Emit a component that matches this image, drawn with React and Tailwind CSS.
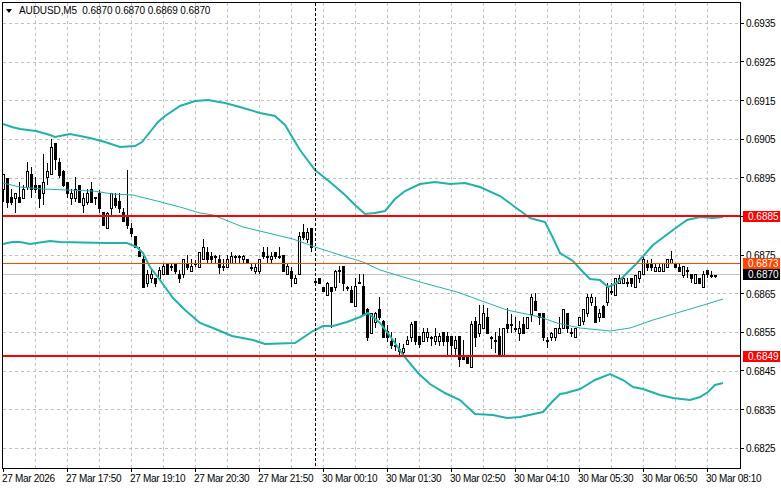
const TEAL = "#20b2aa";

// candle rows: [high, low, bodyTop, bodyBottom, filled], read off the chart at 3x
const SEGMENTS = [
  { y0: 130, rows: [
    [132,215,132,178,0],[145,235,145,215,1],[178,225,200,215,1],[190,248,190,203,0],[155,215,200,215,1],
    [165,205,178,203,0],[97,180,122,170,0],[110,205,132,178,1],[140,190,165,178,1],[165,235,165,203,1],
    [72,225,155,190,0],[100,165,122,142,0],[28,130,52,132,0],[38,120,38,88,1],[85,145,97,135,1],
    [120,170,122,165,1],[155,205,155,190,1],[178,225,190,203,0],[142,215,178,203,0],[165,215,165,215,1],
    [190,248,203,225,0],[178,225,190,215,0],[155,215,178,215,1],[200,225,202,204,1],[180,248,190,235,1],
    [245,285,245,285,1],[245,295,248,295,0],[190,260,190,235,0],[190,235,203,225,1],[190,250,212,235,1],
    [235,272,247,272,1],[120,298,260,285,1],[280,322,295,308,1],[318,355,318,352,1],[350,378,362,378,1],
    [378,470,388,470,1],[420,470,432,458,0],[420,458,432,445,0],[445,470,445,458,1],[410,445,420,445,0],
    [398,432,408,432,0],[398,432,400,432,1],[398,422,408,410,1],[398,432,400,422,1],[420,458,432,445,1],
    [388,445,388,432,0],[375,420,400,410,1],[388,422,408,422,0],[390,410,398,401,1],[365,410,365,410,0],
  ]},
  { y0: 200, rows: [
    [118,178,142,178,0],[142,190,155,178,1],[155,190,167,178,1],[165,190,167,169,1],[165,223,178,200,1],
    [178,212,198,200,1],[165,200,178,200,0],[155,190,167,190,0],[165,190,167,169,1],[165,190,167,169,1],
    [165,190,167,178,0],[178,190,178,190,1],[190,212,200,202,1],[190,223,200,212,0],[178,223,178,212,0],
    [142,178,155,167,1],[142,190,167,169,1],[155,190,167,178,0],[155,178,155,167,1],[142,178,167,169,1],
    [165,212,165,212,1],[190,223,198,223,0],[200,260,212,235,1],[225,248,235,248,0],[97,223,108,223,0],
    [72,120,97,110,1],[85,130,97,118,0],[85,155,85,140,1],[235,248,244,246,1],[235,248,235,248,1],
    [260,272,260,272,1],[245,285,248,285,0],[260,385,260,272,1],[210,272,212,260,0],[198,248,210,212,1],
    [198,272,198,248,1],[258,272,260,262,1],[258,305,270,305,1],[235,318,258,318,0],[223,248,245,247,1],
  ]},
  { y0: 260, rows: [
    [42,165,78,165,1],[145,242,148,230,1],[160,220,160,218,0],[155,205,158,185,0],[110,180,148,172,1],
    [180,230,182,230,1],[195,245,212,230,1],[215,268,242,255,1],[235,272,255,258,1],[250,285,268,272,1],
    [252,290,265,275,0],[228,255,240,253,0],[185,245,192,230,0],[182,255,183,242,1],[228,265,228,253,1],
    [205,242,217,242,0],[205,245,217,230,0],[228,258,230,232,1],[205,255,228,242,0],[218,258,228,242,0],
    [215,258,217,242,1],[215,285,228,242,1],[228,285,228,255,1],[228,285,240,265,0],[228,322,228,298,1],
    [240,298,288,298,1],[285,310,290,310,1],[182,322,192,322,0],[170,260,183,230,1],[135,230,192,218,0],
    [135,205,160,205,0],[145,220,172,218,1],[228,268,230,232,1],[215,280,240,242,1],[205,285,228,285,1],
    [205,285,205,285,0],[145,218,192,205,1],[162,218,192,194,1],[170,215,205,207,1],[182,242,205,218,0],
    [170,218,192,218,1],[170,205,170,205,0],[102,185,112,162,0],[100,150,122,150,1],[158,195,158,170,1],
  ]},
  { y0: 200, rows: [
    [340,422,340,410,1],[410,445,420,422,1],[395,422,398,410,0],[385,422,385,410,0],[350,398,385,398,0],
    [328,385,328,385,0],[340,400,340,385,1],[385,410,397,399,1],[385,410,385,410,0],[350,375,350,375,0],
    [328,375,328,362,0],[282,350,292,340,0],[282,318,292,305,0],[292,365,317,365,1],[328,365,340,352,0],
    [315,352,317,352,1],[250,318,262,305,0],[250,285,272,274,1],[235,285,235,285,0],[225,250,235,248,0],
    [225,250,235,248,0],[235,260,247,249,1],[235,260,235,248,1],[225,260,225,260,0],[212,248,212,235,0],
    [165,222,178,222,0],[180,212,190,200,1],[178,212,190,200,1],[190,212,200,212,0],[190,212,200,212,0],
    [190,212,190,212,0],[178,200,178,200,0],[152,190,178,190,0],[190,202,190,200,1],[190,212,200,212,1],
    [198,235,198,225,0],[200,235,210,212,1],[222,248,222,235,1],[222,248,222,248,0],[235,248,235,248,1],
    [212,260,222,260,0],[210,235,210,222,1],[212,235,225,227,1],[225,235,226,228,1],
  ]},
];

const CANDLES = SEGMENTS.flatMap((s) =>
  s.rows.map(([h, l, t, b, filled]) => ({
    high: Math.round(s.y0 + h / 3),
    low: Math.round(s.y0 + l / 3),
    top: Math.round(s.y0 + t / 3),
    bottom: Math.round(s.y0 + b / 3),
    filled,
  }))
);

const UPPER = "3,124 12,127 20,129 36,131 50,135 55,137 70,134 90,138 105,142 120,147 135,146 142,142 150,132 158,122 165,116 180,106 195,101 208,100 225,103 240,107 260,113 275,116 285,125 300,150 315,170 330,182 345,195 355,205 365,214 375,213 385,211 395,199 405,191 420,184 435,182 450,184 465,183 480,187 500,196 515,207 530,218 545,222 553,238 560,253 573,261 583,272 590,279 600,280 608,287 617,283 637,263 653,245 673,230 687,220 700,217 713,218 723,217";
const LOWER = "3,244 12,242 20,242 30,244 50,241 60,242 107,243 127,243 137,247 143,253 150,267 160,280 173,298 185,310 200,323 213,328 232,336 253,340 265,344 295,343 313,331 323,326 333,326 347,322 360,317 368,313 380,323 393,340 403,355 418,373 430,384 445,393 460,400 475,414 493,415 507,418 520,417 543,412 552,402 560,394 566,393 580,389 595,380 610,374 623,380 633,387 643,389 660,395 673,398 690,400 700,397 708,392 715,385 723,383";
const MIDDLE = "3,183 20,187 43,189 67,190 93,191 113,194 133,195 157,201 180,207 200,213 213,215 243,227 293,239 315,247 340,255 363,262 380,270 420,282 457,292 507,310 540,317 557,323 580,328 610,331 630,328 653,320 680,312 707,304 723,299";

const GRID_X = Array.from({ length: 22 }, (_, i) => 35 + i * 32);
const PRICES = ["0.6935", "0.6925", "0.6915", "0.6905", "0.6895", "0.6885", "0.6875", "0.6865", "0.6855", "0.6845", "0.6835", "0.6825"];
const TIMES = ["27 Mar 2026", "27 Mar 17:50", "27 Mar 19:10", "27 Mar 20:30", "27 Mar 21:50", "30 Mar 00:10", "30 Mar 01:30", "30 Mar 02:50", "30 Mar 04:10", "30 Mar 05:30", "30 Mar 06:50", "30 Mar 08:10"];

function Chart() {
  return (
    <svg width="737" height="465" viewBox="3 3 737 465" className="block">
      <g stroke="#c0c0c0" strokeDasharray="3 3" shapeRendering="crispEdges">
        {PRICES.map((_, i) => {
          const y = Math.round(23 + i * 38.64) + 0.5;
          return <line key={i} x1="3" x2="740" y1={y} y2={y} />;
        })}
        {GRID_X.map((x) => (
          <line key={x} x1={x + 0.5} x2={x + 0.5} y1="3" y2="468" />
        ))}
      </g>

      <line x1="3" x2="740" y1="274.5" y2="274.5" stroke="#c0c0c0" shapeRendering="crispEdges" />

      <g shapeRendering="crispEdges">
        {CANDLES.map((c, i) => {
          const x = 3 + i * 4;
          return (
            <g key={i}>
              <line x1={x + 0.5} x2={x + 0.5} y1={c.high} y2={c.low} stroke="#000" />
              <rect
                x={x - 0.5}
                y={c.top + 0.5}
                width="2"
                height={Math.max(c.bottom - c.top, 1)}
                fill={c.filled ? "#000" : "#fff"}
                stroke="#000"
              />
            </g>
          );
        })}
      </g>

      <polyline points={MIDDLE} fill="none" stroke={TEAL} strokeWidth="1" />
      <polyline points={UPPER} fill="none" stroke={TEAL} strokeWidth="2" />
      <polyline points={LOWER} fill="none" stroke={TEAL} strokeWidth="2" />

      <g shapeRendering="crispEdges">
        <line x1="3" x2="740" y1="263.5" y2="263.5" stroke="#ff4500" />
        <line x1="3" x2="740" y1="216" y2="216" stroke="#ff0000" strokeWidth="2" />
        <line x1="3" x2="740" y1="356" y2="356" stroke="#ff0000" strokeWidth="2" />
        <line x1="315.5" x2="315.5" y1="3" y2="468" stroke="#000" strokeDasharray="3 2" />
      </g>
    </svg>
  );
}

function PriceTag({ top, bg, children }) {
  return (
    <div className={`absolute left-[2px] flex h-[11px] w-[37px] items-center pl-[5px] text-white ${top} ${bg}`}>
      {children}
    </div>
  );
}

export default function App() {
  return (
    <div className="h-[489px] w-[781px] overflow-hidden bg-white pt-[2px] font-['Liberation_Sans',sans-serif] text-[10px] leading-none text-black">
      <div className="flex">
        <div className="relative ml-[2px] w-[739px] border border-black">
          <Chart />
          <div className="absolute left-[3px] top-[3px] flex h-[10px] items-center gap-[7px]">
            <span className="h-0 w-0 border-x-[3.5px] border-t-[4px] border-x-transparent border-t-black" />
            <span className="tracking-[-0.1px] whitespace-pre">AUDUSD,M5  0.6870 0.6870 0.6869 0.6870</span>
          </div>
        </div>

        <div className="relative flex-1 pt-[2px]">
          {PRICES.map((p) => (
            <div key={p} className="flex h-[38.64px] items-center gap-[2px]">
              <span className="h-px w-[3px] bg-black" />
              {/* 0.6885 sits fully under its tag in the terminal, so only the tick shows */}
              {p !== "0.6885" && <span className="mt-[2px] tracking-[-0.2px]">{p}</span>}
            </div>
          ))}
          <PriceTag top="top-[209px]" bg="bg-[#ff0000]">0.6885</PriceTag>
          <PriceTag top="top-[256px]" bg="bg-[#ff4500]">0.6873</PriceTag>
          <PriceTag top="top-[267px]" bg="bg-black">0.6870</PriceTag>
          <PriceTag top="top-[349px]" bg="bg-[#ff0000]">0.6849</PriceTag>
        </div>
      </div>

      <div className="flex pl-[2px]">
        {TIMES.map((t) => (
          <div key={t} className="w-16 shrink-0">
            <div className="ml-px h-[3px] w-px bg-black" />
            <div className="mt-[2px] tracking-[-0.3px] whitespace-nowrap">{t}</div>
          </div>
        ))}
      </div>
    </div>
  );
}
